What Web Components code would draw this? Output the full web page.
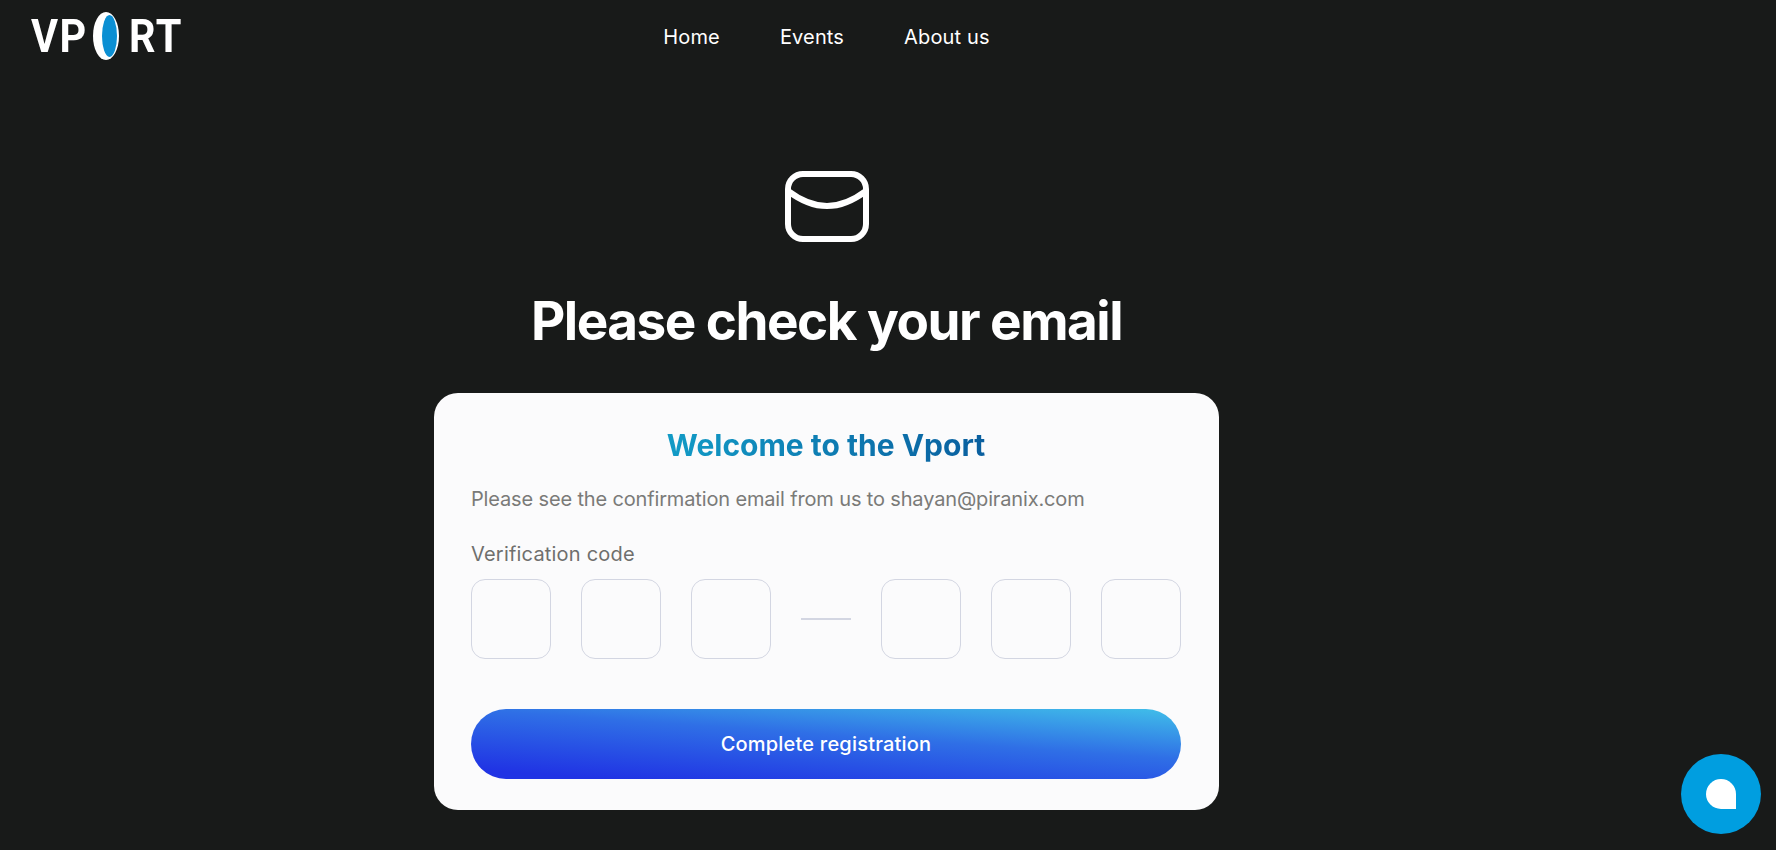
<!DOCTYPE html>
<html lang="en">
<head>
<meta charset="utf-8">
<title>Vport</title>
<style>
  html, body { margin: 0; height: 100%; background: #181a19; overflow: hidden; }
  body { font-family: Inter, "Liberation Sans", sans-serif; }
</style>
</head>
<body>
<vp-page>
  <vp-header slot="header">
    <a href="#">Home</a>
    <a href="#">Events</a>
    <a href="#">About us</a>
  </vp-header>
  <vp-card heading="Welcome to the Vport" email="shayan@piranix.com">
    <vp-code-input label="Verification code"></vp-code-input>
    <vp-button>Complete registration</vp-button>
  </vp-card>
</vp-page>
<vp-chat></vp-chat>

<script>
class VpPage extends HTMLElement {
  connectedCallback() {
    this.attachShadow({ mode: 'open' });
    this.shadowRoot.innerHTML = `
      <style>
        :host { display: block; width: 1653px; }
        main { display: flex; flex-direction: column; align-items: center; padding-top: 96px; }
        svg { display: block; width: 84px; height: 71px; }
        h1 { margin: 45px 0 38px; font-size: 53px; line-height: 68px; font-weight: 700; color: #fff; letter-spacing: -1.5px; }
      </style>
      <slot name="header"></slot>
      <main>
        <svg viewBox="0 0 84 71" fill="none" stroke="#fff" stroke-width="6">
          <rect x="3" y="3" width="78" height="65" rx="15"/>
          <path d="M3 20 C15 29 28 35 42 35 C56 35 69 29 81 20"/>
        </svg>
        <h1>Please check your email</h1>
        <slot></slot>
      </main>
    `;
  }
}
customElements.define('vp-page', VpPage);

class VpHeader extends HTMLElement {
  connectedCallback() {
    this.attachShadow({ mode: 'open' });
    this.shadowRoot.innerHTML = `
      <style>
        :host { display: grid; grid-template-columns: 1fr auto 1fr; align-items: center; height: 75px; padding: 0 31px; box-sizing: border-box; }
        .logo { display: flex; align-items: center; height: 48px; margin-top: -4px; color: #fff; font: 700 46px/48px Roboto, sans-serif; }
        .logo span { display: block; flex: none; white-space: nowrap; transform: scaleX(.9); transform-origin: left center; letter-spacing: 1.5px; }
        .vp { width: 52px; }
        .rt { width: 51px; }
        .logo svg { display: block; flex: none; width: 26px; height: 48px; margin: 0 10px; }
        nav { display: flex; gap: 60px; margin-bottom: 2px; }
        ::slotted(a) { color: #fff; text-decoration: none; font-size: 20px; line-height: 24px; letter-spacing: .15px; }
      </style>
      <div class="logo">
        <span class="vp">VP</span>
        <svg viewBox="0 0 26 48">
          <ellipse cx="13" cy="24" rx="13" ry="24" fill="#fff"/>
          <ellipse cx="16.5" cy="24" rx="7.5" ry="21" fill="#0b8fd3"/>
        </svg>
        <span class="rt">RT</span>
      </div>
      <nav><slot></slot></nav>
    `;
  }
}
customElements.define('vp-header', VpHeader);

class VpCard extends HTMLElement {
  connectedCallback() {
    this.attachShadow({ mode: 'open' });
    this.shadowRoot.innerHTML = `
      <style>
        :host { display: block; width: 785px; height: 417px; box-sizing: border-box; padding: 33px 38px 0 37px; background: #fbfbfc; border-radius: 24px; }
        h2 { width: fit-content; margin: 0 auto; font-size: 30px; line-height: 38px; font-weight: 700;
             background: linear-gradient(90deg, #129bc6, #0a5f9f); -webkit-background-clip: text; background-clip: text; color: transparent; }
        p { margin: 21px 0 0; font-size: 20px; line-height: 28px; color: #7a7a78; letter-spacing: -.15px; }
      </style>
      <h2>${this.getAttribute('heading')}</h2>
      <p>Please see the confirmation email from us to ${this.getAttribute('email')}</p>
      <slot></slot>
    `;
  }
}
customElements.define('vp-card', VpCard);

class VpCodeInput extends HTMLElement {
  connectedCallback() {
    this.attachShadow({ mode: 'open' });
    this.shadowRoot.innerHTML = `
      <style>
        :host { display: block; margin-top: 27px; }
        label { display: block; font-size: 20px; line-height: 28px; color: #6f6f6d; margin-bottom: 11px; letter-spacing: .2px; }
        .row { display: flex; align-items: center; gap: 30px; }
        input { width: 80px; height: 80px; box-sizing: border-box; padding: 0; background: transparent; border: 1px solid #d3d6e2; border-radius: 14px; outline: none; }
        i { display: block; width: 50px; height: 2px; background: #d3d6e2; }
      </style>
      <label>${this.getAttribute('label')}</label>
      <div class="row">
        <input maxlength="1"><input maxlength="1"><input maxlength="1">
        <i></i>
        <input maxlength="1"><input maxlength="1"><input maxlength="1">
      </div>
    `;
  }
}
customElements.define('vp-code-input', VpCodeInput);

class VpButton extends HTMLElement {
  connectedCallback() {
    this.attachShadow({ mode: 'open' });
    this.shadowRoot.innerHTML = `
      <style>
        :host { display: flex; align-items: center; justify-content: center; width: 710px; height: 70px; margin-top: 50px; border-radius: 35px;
                background: linear-gradient(184deg, #40bfe9 0%, #2f6fe6 42%, #2033e4 92%); color: #fff; font-size: 20px; font-weight: 500; letter-spacing: .2px; cursor: pointer; }
      </style>
      <slot></slot>
    `;
  }
}
customElements.define('vp-button', VpButton);

class VpChat extends HTMLElement {
  connectedCallback() {
    this.attachShadow({ mode: 'open' });
    this.shadowRoot.innerHTML = `
      <style>
        :host { position: fixed; right: 15px; bottom: 16px; display: flex; align-items: center; justify-content: center; width: 80px; height: 80px; border-radius: 50%; background: #009ee0; }
        div { width: 30px; height: 30px; background: #fff; border-radius: 15px 15px 0 15px; }
      </style>
      <div></div>
    `;
  }
}
customElements.define('vp-chat', VpChat);
</script>
</body>
</html>
